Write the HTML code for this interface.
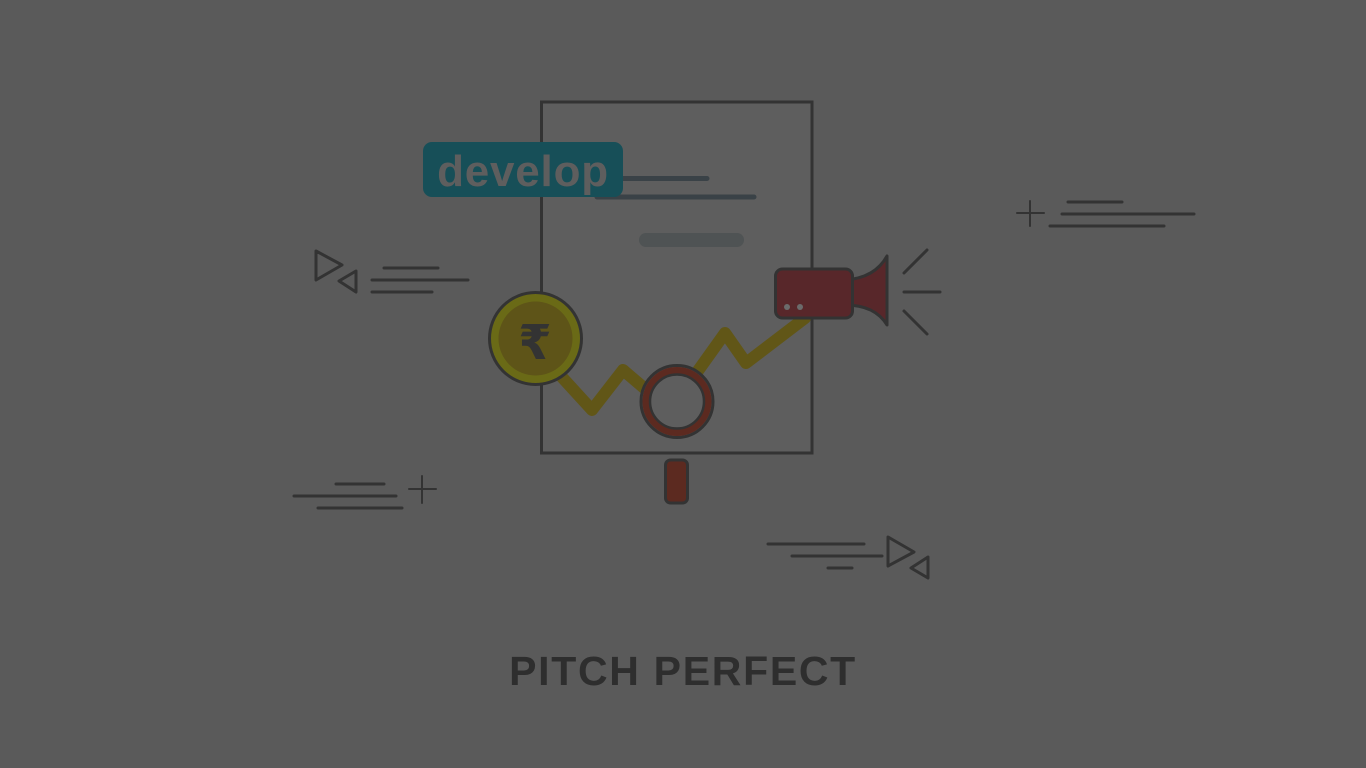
<!DOCTYPE html>
<html><head><meta charset="utf-8"><style>
html,body{margin:0;padding:0;background:#5a5a5a;width:1366px;height:768px;overflow:hidden}
</style></head><body>
<svg width="1366" height="768" viewBox="0 0 1366 768" xmlns="http://www.w3.org/2000/svg" style="position:absolute;left:0;top:0">
<rect width="1366" height="768" fill="#5a5a5a"/>
<rect x="541.5" y="102" width="270.5" height="351" fill="#5e5e5e" stroke="#333" stroke-width="3"/>
<line x1="620" y1="178.5" x2="707" y2="178.5" stroke="#3a4247" stroke-width="5" stroke-linecap="round"/>
<line x1="597" y1="197" x2="754" y2="197" stroke="#3a4247" stroke-width="5" stroke-linecap="round"/>
<line x1="646" y1="240" x2="737" y2="240" stroke="#4f5354" stroke-width="14" stroke-linecap="round"/>
<rect x="423" y="142" width="200" height="55" rx="9" fill="#174f58"/>
<text x="523" y="186" text-anchor="middle" font-family="Liberation Sans, sans-serif" font-weight="bold" font-size="44" letter-spacing="0.8" fill="#5e5e5e">develop</text>
<polyline points="560,375 592,410 623,370 650,393" fill="none" stroke="#615617" stroke-width="12" stroke-linejoin="round" stroke-linecap="round"/>
<polyline points="695,375 725,333 746,363 805,318" fill="none" stroke="#615617" stroke-width="12" stroke-linejoin="round" stroke-linecap="round"/>
<circle cx="535.5" cy="338.5" r="46" fill="#6a6a16" stroke="#333" stroke-width="3"/>
<circle cx="535.5" cy="338.5" r="37" fill="#5e5418"/>
<text x="535" y="359" text-anchor="middle" font-family="DejaVu Sans, sans-serif" font-weight="bold" font-size="48" fill="#333">₹</text>
<circle cx="677" cy="401.5" r="36" fill="#5e5e5e" stroke="#333" stroke-width="3"/>
<circle cx="677" cy="401.5" r="31" fill="none" stroke="#5c2a20" stroke-width="7"/>
<circle cx="677" cy="401.5" r="27" fill="none" stroke="#333" stroke-width="2.5"/>
<rect x="665.5" y="460" width="22" height="43" rx="5" fill="#5c2a20" stroke="#333" stroke-width="3"/>
<path d="M845,280 Q875,278 887,256 L887,325 Q875,305 845,305 Z" fill="#58272a" stroke="#333" stroke-width="3" stroke-linejoin="round"/>
<rect x="775.5" y="269" width="77" height="49" rx="7" fill="#58272a" stroke="#333" stroke-width="3"/>
<circle cx="787" cy="307" r="3" fill="#6b6b6b"/><circle cx="800" cy="307" r="3" fill="#6b6b6b"/>
<g stroke="#333" stroke-width="3" stroke-linecap="round" fill="none">
<line x1="904" y1="273" x2="927" y2="250"/>
<line x1="904" y1="292" x2="940" y2="292"/>
<line x1="904" y1="311" x2="927" y2="334"/>
<path d="M316,251 L342,265 L316,280 Z" stroke-linejoin="round"/>
<path d="M356,271 L339,281 L356,292 Z" stroke-linejoin="round"/>
<line x1="384" y1="268" x2="438" y2="268"/>
<line x1="372" y1="280" x2="468" y2="280"/>
<line x1="372" y1="292" x2="432" y2="292"/>
<line x1="1030" y1="201" x2="1030" y2="226" stroke-width="2"/>
<line x1="1017" y1="213" x2="1044" y2="213" stroke-width="2"/>
<line x1="1068" y1="202" x2="1122" y2="202"/>
<line x1="1062" y1="214" x2="1194" y2="214"/>
<line x1="1050" y1="226" x2="1164" y2="226"/>
<line x1="336" y1="484" x2="384" y2="484"/>
<line x1="294" y1="496" x2="396" y2="496"/>
<line x1="318" y1="508" x2="402" y2="508"/>
<line x1="422" y1="476" x2="422" y2="503" stroke-width="2"/>
<line x1="409" y1="489" x2="436" y2="489" stroke-width="2"/>
<line x1="768" y1="544" x2="864" y2="544"/>
<line x1="792" y1="556" x2="882" y2="556"/>
<line x1="828" y1="568" x2="852" y2="568"/>
<path d="M888,537 L914,552 L888,566 Z" stroke-linejoin="round"/>
<path d="M928,557 L911,568 L928,578 Z" stroke-linejoin="round"/>
</g>
<text x="683" y="685" text-anchor="middle" font-family="Liberation Sans, sans-serif" font-weight="bold" font-size="41" fill="#2e2e2e" letter-spacing="1.7">PITCH PERFECT</text>
</svg>
</body></html>
